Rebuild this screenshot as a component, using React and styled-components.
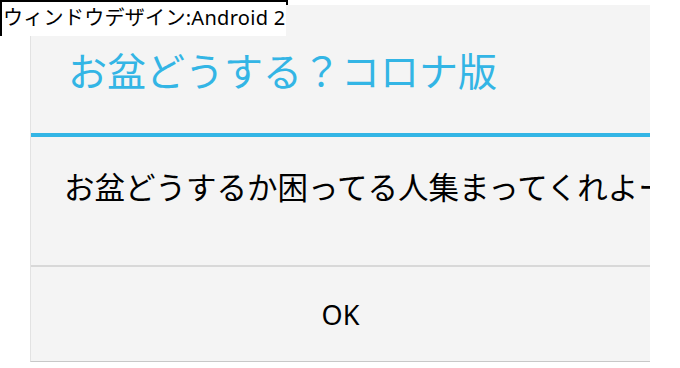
import React from 'react';
import styled, { createGlobalStyle } from 'styled-components';

const GlobalStyle = createGlobalStyle`
    body {
        margin : 0;
        background : #ffffff;
        font-family : "Noto Sans CJK JP", "Noto Sans", sans-serif;
    }
`;

const Stage = styled.div`
    position : relative;
    width : 680px;
    height : 368px;
    overflow : hidden;
`;

const CaptionFrame = styled.div`
    position : absolute;
    top : 0;
    left : 0;
    width : 288px;
    height : 36px;
    box-sizing : border-box;
    border : 2px solid #000000;
    background : #ffffff;
`;

const CaptionText = styled.div`
    position : absolute;
    top : 2px;
    left : 2px;
    z-index : 2;
    width : 284px;
    height : 34px;
    padding-left : 1px;
    box-sizing : border-box;
    background : #ffffff;
    color : #000000;
    font-family : "Noto Sans", "Noto Sans CJK JP", sans-serif;
    font-size : 20px;
    letter-spacing : 0.3px;
    line-height : 32px;
    white-space : nowrap;
    overflow : hidden;
`;

const Dialog = styled.div`
    position : relative;
    z-index : 1;
    display : flex;
    flex-direction : column;
    width : 620px;
    height : 357px;
    margin : 5px 0 0 30px;
    box-sizing : border-box;
    background : #f4f4f4;
    border-left : 1px solid #e2e2e2;
    border-bottom : 1px solid #c8c8c8;
    overflow : hidden;
`;

const Title = styled.div`
    display : flex;
    align-items : center;
    height : 128px;
    padding-left : 37px;
    color : #33b5e5;
    font-size : 39px;
    white-space : nowrap;
`;

const Accent = styled.div`
    height : 4px;
    background : #33b5e5;
`;

const Message = styled.div`
    display : flex;
    align-items : center;
    height : 128px;
    padding : 0 0 30px 33px;
    box-sizing : border-box;
    color : #000000;
    font-size : 30.5px;
    white-space : nowrap;
`;

const Divider = styled.div`
    height : 2px;
    background : #d8d8d8;
`;

const ActionButton = styled.button`
    flex : 1;
    display : flex;
    align-items : center;
    justify-content : center;
    border : none;
    background : transparent;
    color : #000000;
    font-family : "Noto Sans", "Noto Sans CJK JP", sans-serif;
    font-size : 27px;
    padding : 0;
`;

export default function App(){
    return(
        <Stage>
            <GlobalStyle/>
            <CaptionFrame/>
            <CaptionText>ウィンドウデザイン:Android 2</CaptionText>
            <Dialog>
                <Title>お盆どうする？コロナ版</Title>
                <Accent/>
                <Message>お盆どうするか困ってる人集まってくれよー</Message>
                <Divider/>
                <ActionButton>OK</ActionButton>
            </Dialog>
        </Stage>
    )
}
